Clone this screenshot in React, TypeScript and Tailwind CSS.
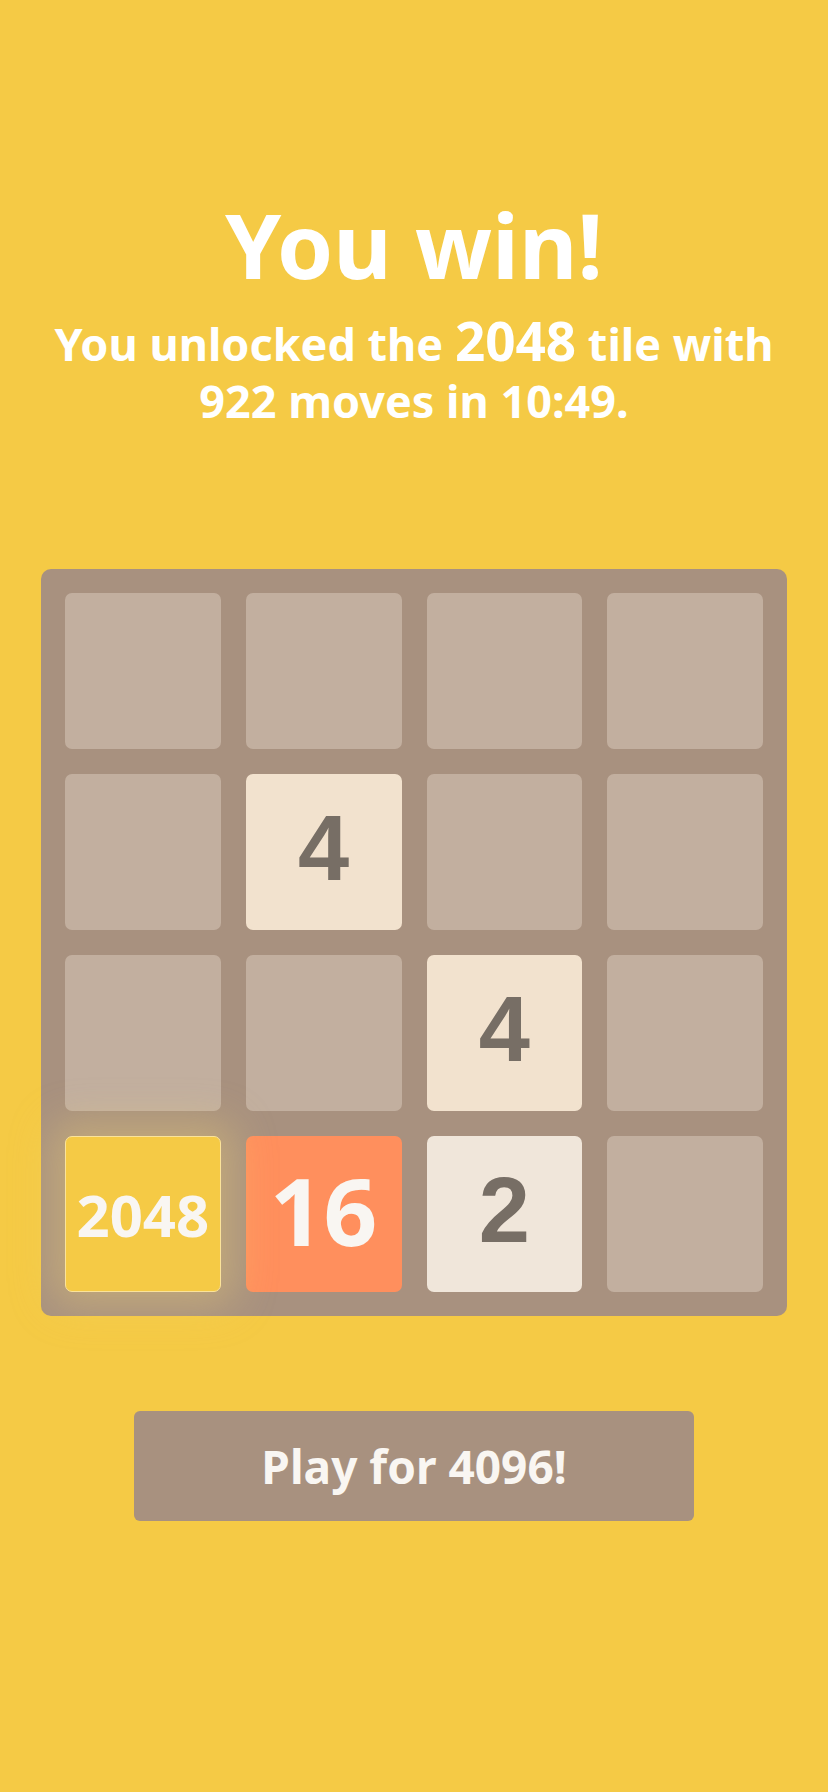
import React from 'react';

type Cell = number | null;

const board: Cell[][] = [
  [null, null, null, null],
  [null, 4, null, null],
  [null, null, 4, null],
  [2048, 16, 2, null],
];

function Tile({ value }: { value: Cell }) {
  if (value === null) {
    return <div className="h-[156px] rounded-[7px] bg-[#c2af9f]" />;
  }

  if (value === 2048) {
    return (
      <div className="relative z-10 flex h-[156px] items-center justify-center rounded-[7px] border border-[#fbe39a] bg-[#f5ca45] font-['Noto_Sans',sans-serif] text-[58px] font-bold text-[#f9f6f2] shadow-[0_0_40px_14px_rgba(243,215,116,0.35)]">
        2048
      </div>
    );
  }

  if (value === 16) {
    return (
      <div className="flex h-[156px] items-center justify-center rounded-[7px] bg-[#ff8f5d] pb-[8px] font-['Noto_Sans',sans-serif] text-[94px] font-bold leading-none text-[#f9f6f2]">
        16
      </div>
    );
  }

  const bg = value === 4 ? 'bg-[#f2e2ce]' : 'bg-[#f0e6da]';
  return (
    <div
      className={`flex h-[156px] items-center justify-center rounded-[7px] ${bg} pb-[8px] font-['Liberation_Sans',Arial,sans-serif] text-[92px] font-bold leading-none text-[#776e65]`}
    >
      {value}
    </div>
  );
}

export default function App() {
  return (
    <div className="flex min-h-[1792px] w-full flex-col items-center bg-[#f5ca45] font-['Noto_Sans',sans-serif] text-white">
      <h1 className="mt-[199px] text-[90px] font-bold leading-[90px]">You win!</h1>
      <p className="mt-[25px] text-center text-[45px] font-bold leading-[57px]">
        You unlocked the <span className="text-[53px] leading-none">2048</span> tile with
        <br />
        922 moves in 10:49.
      </p>

      <div className="mt-[140px] grid w-[746px] grid-cols-4 gap-[25px] rounded-[10px] bg-[#a8917f] p-[24px]">
        {board.flat().map((value, i) => (
          <Tile key={i} value={value} />
        ))}
      </div>

      <button className="mt-[95px] flex h-[110px] w-[560px] items-center justify-center rounded-[6px] bg-[#a8917f] text-[46px] font-bold text-[#f9f6f2]">
        Play for 4096!
      </button>
    </div>
  );
}
